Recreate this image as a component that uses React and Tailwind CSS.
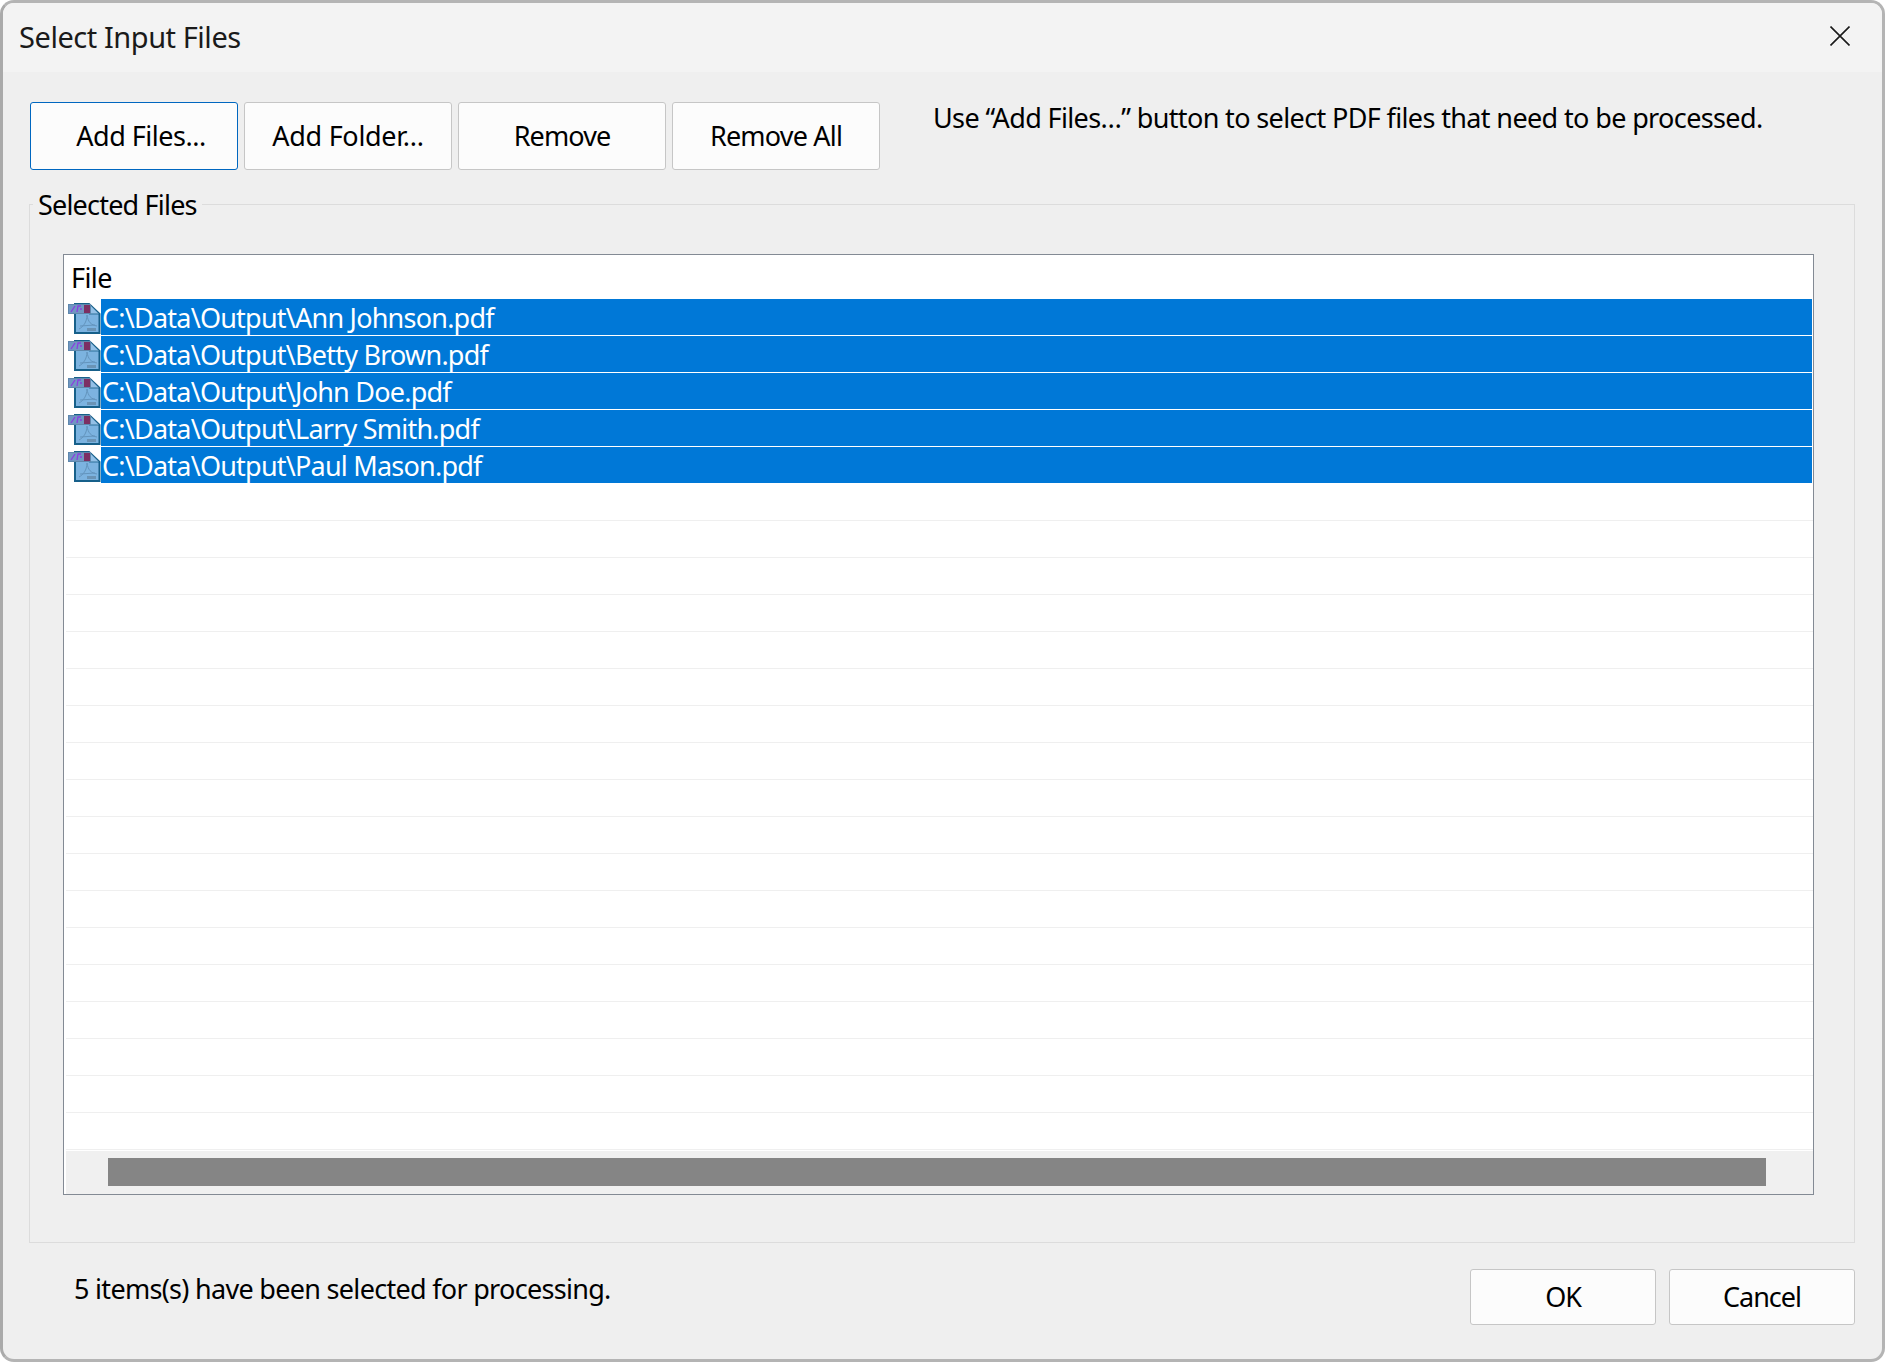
const FONT = "font-['Noto_Sans',sans-serif]";

function PdfIcon() {
  return (
    <svg width="33" height="33" viewBox="0 0 33 33" className="shrink-0">
      <path d="M7 3 H21 L31.5 13 V32 H7 Z" fill="#7cb3e0" stroke="#17608a" strokeWidth="2" />
      <path d="M21 3 V13 H31" fill="#93c0e6" stroke="#2a7099" strokeWidth="1" />
      <rect x="0.5" y="3.5" width="22" height="9" fill="#7096c2" stroke="#5f88ad" />
      <rect x="16" y="4" width="6" height="8" fill="#7c2f63" />
      <path d="M3 11 L7 5 M9 11 L10 5 H13 M12 8 L14 8" stroke="#8a3fe0" strokeWidth="1.3" fill="none" />
      <path d="M19 14 C20 21 23 24 29 25 M19 14 C19 21 15 26 11 28 M12 25 L27 24" stroke="#6394bd" strokeWidth="1" fill="none" />
      <rect x="19" y="27" width="9" height="3" fill="#6a93b5" />
    </svg>
  );
}

function Btn({ children, focused, className = "" }) {
  return (
    <button
      className={`flex items-center justify-center rounded-[3px] border bg-[#fcfcfc] text-[27px] text-black ${
        focused ? "border-[#0067c0]" : "border-[#c6c6c6]"
      } ${className}`}
    >
      {children}
    </button>
  );
}

const files = [
  "C:\\Data\\Output\\Ann Johnson.pdf",
  "C:\\Data\\Output\\Betty Brown.pdf",
  "C:\\Data\\Output\\John Doe.pdf",
  "C:\\Data\\Output\\Larry Smith.pdf",
  "C:\\Data\\Output\\Paul Mason.pdf",
];

export default function App() {
  return (
    <div className={`h-[1362px] w-[1885px] overflow-hidden bg-white ${FONT} tracking-[-0.6px]`}>
      <div className="flex h-[1362px] w-[1885px] flex-col overflow-hidden rounded-[14px] border-[3px] border-[#b4b4b4] border-l-[#aaaaaa] bg-[#efefef]">
        <div className="flex h-[69px] shrink-0 items-center justify-between bg-[#f3f3f3] pl-[16px] pr-[32px]">
          <span className="mt-[-2px] text-[29px] tracking-[-0.45px] text-[#1a1a1a]">Select Input Files</span>
          <svg width="20" height="20" viewBox="0 0 20 20" className="mb-[4px]">
            <path d="M0.5 0.5 L19.5 19.5 M19.5 0.5 L0.5 19.5" stroke="#1a1a1a" strokeWidth="1.6" />
          </svg>
        </div>

        <div className="flex shrink-0 items-start pl-[27px] pt-[30px]">
          <div className="flex gap-[6px]">
            <Btn focused className="h-[68px] w-[208px] pl-[14px] tracking-[-0.5px]">Add Files...</Btn>
            <Btn className="h-[68px] w-[208px] tracking-[-0.3px]">Add Folder...</Btn>
            <Btn className="h-[68px] w-[208px] tracking-[-0.9px]">Remove</Btn>
            <Btn className="h-[68px] w-[208px] tracking-[-0.8px]">Remove All</Btn>
          </div>
          <p className="ml-[53px] mt-[-4px] text-[27px] tracking-[-0.63px] text-black">
            Use “Add Files…” button to select PDF files that need to be processed.
          </p>
        </div>

        <div className="relative ml-[26px] mt-[34px] h-[1039px] w-[1826px] shrink-0 border border-[#dcdcdc] pl-[33px] pt-[49px]">
          <span className="absolute left-[3px] top-[-19px] bg-[#efefef] px-[5px] text-[27px] leading-[38px] tracking-[-0.8px] text-black">
            Selected Files
          </span>
          <div className="flex h-[941px] w-[1751px] flex-col border border-[#838a94] bg-white">
            <div className="h-[44px] shrink-0 pl-[7px] text-[27px] leading-[46px] text-black">File</div>
            {files.map((f) => (
              <div key={f} className="mr-[1px] flex h-[37px] shrink-0 items-center pl-[4px]">
                <PdfIcon />
                <div className="h-[36px] flex-1 self-start bg-[#0078d7] pl-[1px] text-[27px] leading-[38px] tracking-[-0.78px] text-white">
                  {f}
                </div>
              </div>
            ))}
            {Array.from({ length: 18 }).map((_, i) => (
              <div key={i} className="ml-[2px] h-[37px] shrink-0 border-b border-[#efefef]" />
            ))}
            <div className="ml-[2px] mt-[1px] flex h-[43px] shrink-0 items-center bg-[#f0f0f0] pb-[2px] pl-[42px]">
              <div className="h-[28px] w-[1658px] bg-[#858585]" />
            </div>
          </div>
        </div>

        <div className="flex flex-1 items-start justify-between pl-[71px] pr-[27px] pt-[26px]">
          <span className="text-[27px] tracking-[-0.7px] text-black">5 items(s) have been selected for processing.</span>
          <div className="flex gap-[13px]">
            <Btn className="h-[56px] w-[186px] tracking-[-1.2px]">OK</Btn>
            <Btn className="h-[56px] w-[186px] tracking-[-1px]">Cancel</Btn>
          </div>
        </div>
      </div>
    </div>
  );
}
